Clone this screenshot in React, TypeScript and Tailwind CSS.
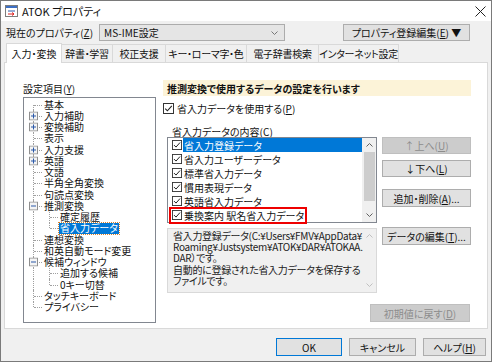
import React from 'react';

const FONT = "[font-family:'Noto_Sans_CJK_JP','Noto_Sans',sans-serif] [font-feature-settings:'palt']";

type Node = { label: string; level: 0 | 1; box?: '+' | '-'; selected?: boolean; lastChild?: boolean; last?: boolean };

const tree: Node[] = [
  { label: '基本', level: 0 },
  { label: '入力補助', level: 0, box: '+' },
  { label: '変換補助', level: 0, box: '+' },
  { label: '表示', level: 0 },
  { label: '入力支援', level: 0, box: '+' },
  { label: '英語', level: 0, box: '+' },
  { label: '文語', level: 0 },
  { label: '半角全角変換', level: 0 },
  { label: '句読点変換', level: 0 },
  { label: '推測変換', level: 0, box: '-' },
  { label: '確定履歴', level: 1 },
  { label: '省入力データ', level: 1, selected: true, lastChild: true },
  { label: '連想変換', level: 0 },
  { label: '和英自動モード変更', level: 0 },
  { label: '候補ウィンドウ', level: 0, box: '-' },
  { label: '追加する候補', level: 1 },
  { label: '0キー切替', level: 1, lastChild: true },
  { label: 'タッチキーボード', level: 0 },
  { label: 'プライバシー', level: 0, last: true },
];

const listItems = [
  '省入力登録データ',
  '省入力ユーザーデータ',
  '標準省入力データ',
  '慣用表現データ',
  '英語省入力データ',
  '乗換案内 駅名省入力データ',
];

function ExpandBox({ sign }: { sign: '+' | '-' }) {
  return (
    <svg width="9" height="9" viewBox="0 0 9 9" className="absolute left-[3px] top-1/2 -translate-y-1/2">
      <rect x="0.5" y="0.5" width="8" height="8" fill="#f4f4f4" stroke="#8f8f8f" />
      <line x1="2" y1="4.5" x2="7" y2="4.5" stroke="#2b58a8" />
      {sign === '+' && <line x1="4.5" y1="2" x2="4.5" y2="7" stroke="#2b58a8" />}
    </svg>
  );
}

function Check({ size = 11 }: { size?: number }) {
  return (
    <svg width={size} height={size} viewBox="0 0 11 11" className="shrink-0">
      <rect x="0.5" y="0.5" width="10" height="10" fill="#fff" stroke="#333" />
      <path d="M2.2 5.6 L4.4 7.8 L8.8 2.8" fill="none" stroke="#222" strokeWidth="1.1" />
    </svg>
  );
}

function Connector({ first, last, box }: { first?: boolean; last?: boolean; box?: '+' | '-' }) {
  return (
    <div className="relative w-[16px] h-full shrink-0">
      <span
        className={`absolute left-[7px] border-l border-dotted border-[#a0a0a0] ${first ? 'top-1/2' : 'top-0'} ${last ? 'h-1/2' : 'bottom-0'}`}
      />
      <span className="absolute left-[8px] right-0 top-1/2 border-t border-dotted border-[#a0a0a0]" />
      {box && <ExpandBox sign={box} />}
    </div>
  );
}

function Btn({ children, className = '', disabled = false }: { children: React.ReactNode; className?: string; disabled?: boolean }) {
  return (
    <div
      className={`flex items-center justify-center border text-[10px] whitespace-nowrap ${
        disabled ? 'bg-[#cccccc] border-[#bfbfbf] text-[#8d8d8d]' : 'bg-[#e1e1e1] border-[#adadad] text-[#111]'
      } ${className}`}
    >
      {children}
    </div>
  );
}

export default function App() {
  const tabs = [
    { label: '入力・変換', w: 'w-[56px]' },
    { label: '辞書・学習', w: 'w-[51px]' },
    { label: '校正支援', w: 'w-[53px]' },
    { label: 'キー・ローマ字・色', w: 'w-[81px]' },
    { label: '電子辞書検索', w: 'w-[72px]' },
    { label: 'インターネット設定', w: 'w-[80px]' },
  ];

  return (
    <div className={`w-[492px] h-[362px] border border-[#7a7a7a] bg-[#f0f0f0] flex flex-col text-[#111] ${FONT}`}>
      {/* title bar */}
      <div className="h-[20px] bg-white flex items-center shrink-0">
        <svg width="13" height="12" viewBox="0 0 13 12" className="ml-[4px]">
          <rect x="0.5" y="0.5" width="12" height="11" fill="#fff" stroke="#7d7d7d" />
          <rect x="1" y="1" width="11" height="2" fill="#3c6fc4" />
          <line x1="3" y1="6" x2="10" y2="6" stroke="#2b58a8" />
          <path d="M3 9 H9 M7 7.5 L9 9 L7 10.5" fill="none" stroke="#d22" />
        </svg>
        <span className="ml-[4px] text-[11px]">ATOK プロパティ</span>
        <svg width="11" height="11" viewBox="0 0 11 11" className="ml-auto mr-[5px]">
          <path d="M0.5 0.5 L10.5 10.5 M10.5 0.5 L0.5 10.5" stroke="#222" strokeWidth="1" />
        </svg>
      </div>

      {/* property row */}
      <div className="h-[23px] flex items-center shrink-0 text-[10px]">
        <span className="ml-[5px]">現在のプロパティ(<span className="underline">Z</span>)</span>
        <div className="ml-[6px] w-[186px] h-[17px] border border-[#acacac] bg-[#e5e5e5] flex items-center pl-[4px] pr-[6px]">
          <span>MS-IME設定</span>
          <svg width="7" height="4" viewBox="0 0 7 4" className="ml-auto">
            <path d="M0.5 0.5 L3.5 3.5 L6.5 0.5" fill="none" stroke="#777" />
          </svg>
        </div>
        <Btn className="ml-auto mr-[21px] w-[127px] h-[17px]">
          プロパティ登録編集(<span className="underline">E</span>) ▼
        </Btn>
      </div>

      {/* tabs */}
      <div className="h-[18px] flex items-end pl-[5px] shrink-0 text-[10px] relative z-10 whitespace-nowrap">
        {tabs.map((t, i) =>
          i === 0 ? (
            <div key={t.label} className={`${t.w} h-[20px] -mb-px bg-white border border-b-0 border-[#d9d9d9] flex items-center justify-center shrink-0`}>
              {t.label}
            </div>
          ) : (
            <div key={t.label} className={`${t.w} h-[18px] border border-l-0 border-b-0 border-[#d9d9d9] bg-[#f0f0f0] flex items-center justify-center shrink-0 tracking-[-0.3px]`}>
              {t.label}
            </div>
          )
        )}
      </div>

      {/* panel */}
      <div className="mx-[3px] h-[267px] bg-white border border-[#d9d9d9] shrink-0 flex pt-[17px] text-[10px]">
        {/* left column */}
        <div className="pl-[18px] flex flex-col">
          <div className="h-[16px] flex items-center">設定項目(<span className="underline">Y</span>)</div>
          <div className="mt-[1px] w-[133px] h-[226px] border border-[#828790] bg-white pt-[1px] pl-[2px]">
            {tree.map((n, i) => (
              <div key={n.label} className="h-[11.25px] flex items-center leading-none whitespace-nowrap">
                {n.level === 1 && (
                  <div className="relative w-[16px] h-full shrink-0">
                    <span className="absolute left-[7px] top-0 bottom-0 border-l border-dotted border-[#a0a0a0]" />
                  </div>
                )}
                <Connector first={i === 0} last={n.level === 1 ? n.lastChild : n.last} box={n.box} />
                <span
                  className={`ml-[1px] px-[1px] h-full flex items-center ${
                    n.selected ? 'bg-[#0078d7] text-white outline-1 outline-dotted outline-[#d9822b]' : ''
                  }`}
                >
                  {n.label}
                </span>
              </div>
            ))}
          </div>
        </div>

        {/* right column */}
        <div className="ml-[7px] w-[308px] flex flex-col">
          <div className="h-[16px] bg-[#fcf3d8] flex items-center pl-[4px] font-bold">推測変換で使用するデータの設定を行います</div>

          <div className="mt-[6px] h-[12px] flex items-center gap-[3px]">
            <Check />
            <span>省入力データを使用する(<span className="underline">P</span>)</span>
          </div>

          <div className="mt-[11px] h-[12px] flex items-center pl-[9px]">
            省入力データの内容(<span className="underline">C</span>)
          </div>

          <div className="flex">
            <div className="ml-[4px] w-[210px] h-[86px] border border-[#828790] bg-white flex">
              <div className="flex-1 flex flex-col">
                {listItems.map((it, i) => (
                  <div key={it} className="h-[14px] flex items-center pl-[4px] whitespace-nowrap">
                    <Check size={10} />
                    <span className={`ml-[1px] h-full flex-1 flex items-center pl-[1px] ${i === 0 ? 'bg-[#0078d7] text-white' : ''}`}>
                      {i === 5 ? <span className="outline-2 outline-[#e00] outline-offset-[-1px] -ml-[14px] pl-[14px] pr-[2px]">{it}</span> : it}
                    </span>
                  </div>
                ))}
              </div>
              <div className="w-[14px] bg-[#f0f0f0] flex flex-col items-center">
                <div className="h-[14px] flex items-center">
                  <svg width="7" height="4" viewBox="0 0 7 4"><path d="M0.5 3.5 L3.5 0.5 L6.5 3.5" fill="none" stroke="#606060" /></svg>
                </div>
                <div className="w-[11px] h-[49px] bg-[#cdcdcd]" />
                <div className="mt-auto h-[14px] flex items-center">
                  <svg width="7" height="4" viewBox="0 0 7 4"><path d="M0.5 0.5 L3.5 3.5 L6.5 0.5" fill="none" stroke="#606060" /></svg>
                </div>
              </div>
            </div>

            <div className="ml-[5px] flex flex-col">
              <Btn disabled className="w-[89px] h-[17px]">↑上へ(<span className="underline">U</span>)</Btn>
              <Btn className="mt-[6px] w-[89px] h-[17px]">↓下へ(<span className="underline">L</span>)</Btn>
              <Btn className="mt-[12px] w-[89px] h-[18px]">追加・削除(<span className="underline">A</span>)...</Btn>
            </div>
          </div>

          <div className="mt-[5px] flex">
            <div className="ml-[4px] w-[210px] h-[65px] border border-[#d9d9d9] bg-[#f0f0f0] flex">
              <div className="flex-1 pl-[5px] pt-[1px] leading-[11.2px] whitespace-nowrap text-[#222] tracking-[-0.3px]">
                <div>省入力登録データ(C:¥Users¥FMV¥AppData¥</div>
                <div>Roaming¥Justsystem¥ATOK¥DAR¥ATOKAA.</div>
                <div>DAR）です。</div>
                <div>自動的に登録された省入力データを保存する</div>
                <div>ファイルです。</div>
              </div>
              <div className="w-[14px] flex flex-col items-center">
                <div className="h-[14px] flex items-center">
                  <svg width="7" height="4" viewBox="0 0 7 4"><path d="M0.5 3.5 L3.5 0.5 L6.5 3.5" fill="none" stroke="#c0c0c0" /></svg>
                </div>
                <div className="mt-auto h-[14px] flex items-center">
                  <svg width="7" height="4" viewBox="0 0 7 4"><path d="M0.5 0.5 L3.5 3.5 L6.5 0.5" fill="none" stroke="#c0c0c0" /></svg>
                </div>
              </div>
            </div>
            <Btn className="ml-[5px] -mt-[1px] w-[89px] h-[18px]">データの編集(<span className="underline">T</span>)...</Btn>
          </div>

          <div className="mt-[11px] flex justify-end pr-[1px]">
            <Btn disabled className="w-[100px] h-[18px]">初期値に戻す(<span className="underline">D</span>)</Btn>
          </div>
        </div>
      </div>

      {/* bottom buttons */}
      <div className="flex justify-end gap-[7px] pr-[5px] pt-[9px] text-[10px]">
        <Btn className="w-[66px] h-[18px] !border-[#0078d7]">OK</Btn>
        <Btn className="w-[67px] h-[18px]">キャンセル</Btn>
        <Btn className="w-[63px] h-[18px]">ヘルプ(<span className="underline">H</span>)</Btn>
      </div>
    </div>
  );
}
